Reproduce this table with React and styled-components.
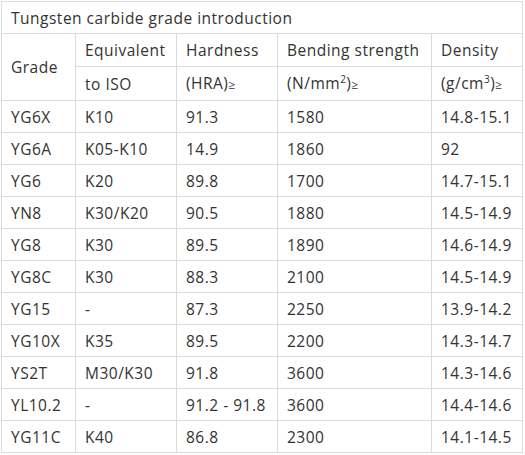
import React from "react";
import styled, { createGlobalStyle } from "styled-components";

const GlobalStyle = createGlobalStyle`
  body {
    margin: 0;
    background: #fff;
    font-family: "Open Sans", "Noto Sans", Arial, sans-serif;
    color: #333;
  }
`;

const Wrap = styled.div`
  padding: 1px 0 0 1px;
`;

const Table = styled.table`
  border-collapse: collapse;
  table-layout: fixed;
  width: 522px;
  font-size: 15.5px;
  letter-spacing: 0.5px;
`;

const Cell = styled.td`
  border: 1px solid #dcdcdc;
  padding: 0 0 0 9px;
  height: ${(p) => p.$h || 31}px;
  vertical-align: middle;
  white-space: nowrap;
  text-align: left;
  font-weight: normal;
  line-height: 20px;
`;

const Sup = styled.sup`
  font-size: 10px;
  line-height: 0;
  vertical-align: 6px;
`;

const Ge = styled.span`
  font-size: 12px;
`;

const rows = [
  ["YG6X", "K10", "91.3", "1580", "14.8-15.1"],
  ["YG6A", "K05-K10", "14.9", "1860", "92"],
  ["YG6", "K20", "89.8", "1700", "14.7-15.1"],
  ["YN8", "K30/K20", "90.5", "1880", "14.5-14.9"],
  ["YG8", "K30", "89.5", "1890", "14.6-14.9"],
  ["YG8C", "K30", "88.3", "2100", "14.5-14.9"],
  ["YG15", "-", "87.3", "2250", "13.9-14.2"],
  ["YG10X", "K35", "89.5", "2200", "14.3-14.7"],
  ["YS2T", "M30/K30", "91.8", "3600", "14.3-14.6"],
  ["YL10.2", "-", "91.2 - 91.8", "3600", "14.4-14.6"],
  ["YG11C", "K40", "86.8", "2300", "14.1-14.5"],
];

export default function App() {
  return (
    <Wrap>
      <GlobalStyle />
      <Table>
        <colgroup>
          <col style={{ width: 74 }} />
          <col style={{ width: 101 }} />
          <col style={{ width: 101 }} />
          <col style={{ width: 154 }} />
          <col style={{ width: 91 }} />
        </colgroup>
        <tbody>
          <tr>
            <Cell colSpan={5}>Tungsten carbide grade introduction</Cell>
          </tr>
          <tr>
            <Cell rowSpan={2}>Grade</Cell>
            <Cell $h={32}>Equivalent</Cell>
            <Cell $h={32}>Hardness</Cell>
            <Cell $h={32}>Bending strength</Cell>
            <Cell $h={32}>Density</Cell>
          </tr>
          <tr>
            <Cell $h={33}>to ISO</Cell>
            <Cell $h={33}>
              (HRA)<Ge>≥</Ge>
            </Cell>
            <Cell $h={33}>
              (N/mm<Sup>2</Sup>)<Ge>≥</Ge>
            </Cell>
            <Cell $h={33}>
              (g/cm<Sup>3</Sup>)<Ge>≥</Ge>
            </Cell>
          </tr>
          {rows.map((r) => (
            <tr key={r[0]}>
              {r.map((v, i) => (
                <Cell key={i}>{v}</Cell>
              ))}
            </tr>
          ))}
        </tbody>
      </Table>
    </Wrap>
  );
}
